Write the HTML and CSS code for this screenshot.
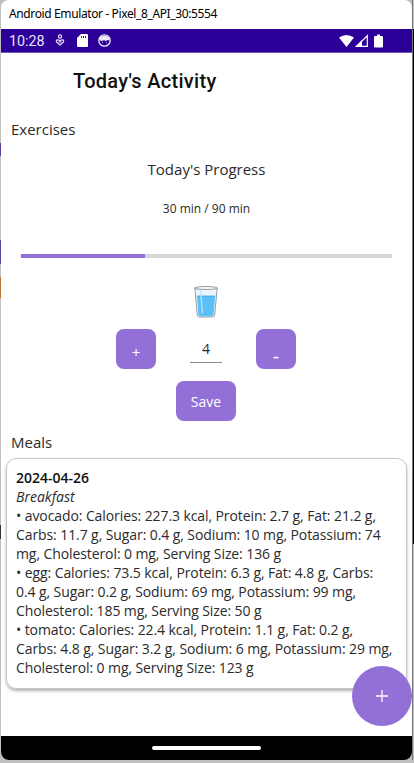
FILE: index.html
```html
<!DOCTYPE html>
<html lang="en">
<head>
<meta charset="utf-8">
<title>Today's Activity</title>
<link rel="stylesheet" href="styles.css">
</head>
<body>
<div class="window">
  <header class="titlebar"><span>Android Emulator - Pixel_8_API_30:5554</span></header>
  <div class="status">
    <span class="clock">10:28</span>
    <svg class="ic-health" width="10" height="13" viewBox="0 0 10 13" fill="none" stroke="#e4dcf4" stroke-width="1.2"><circle cx="5" cy="2.5" r="1.6"/><path d="M5 11L1.600 8C.5 6 3 4.800 5 7C7 4.800 9.500 6 8.400 8Z"/><path d="M3.500 8h3"/></svg>
    <svg class="ic-sd" width="11" height="13" viewBox="0 0 11 13"><path d="M4 0H10Q11 0 11 1V12Q11 13 10 13H1Q0 13 0 12V4Z" fill="#fff"/><path d="M4.500 2v2M6.500 2v2M8.500 2v2" stroke="#2c0098" stroke-width=".9"/></svg>
    <svg class="ic-face" width="13" height="13" viewBox="0 0 13 13"><circle cx="6.500" cy="6.500" r="5.700" fill="none" stroke="#eee9f8" stroke-width="1.300"/><path d="M1.500 3.500Q6.500 0 11.500 3.500V6.500L9.500 6L8 7L6 6.300L3.500 7L1.500 6.300Z" fill="#eee9f8"/><circle cx="4.500" cy="8.300" r=".6" fill="#c9b9ea"/><circle cx="8.500" cy="8.300" r=".6" fill="#c9b9ea"/></svg>
    <svg class="ic-signal" width="44" height="15" viewBox="0 0 44 15"><path d="M0 3.500Q7.500-1.500 15 3.500L7.500 13Z" fill="#fff"/><path d="M17.500 12.400L28.300 1.800V12.400Z" fill="none" stroke="#fff" stroke-width="1.200"/><path d="M16 13L23 6V13Z" fill="#fff"/><path d="M38 .5h3V2h2Q44 2 44 3V12.500Q44 13.500 43 13.500H36Q35 13.500 35 12.500V3Q35 2 36 2h2Z" fill="#fff"/></svg>
  </div>
  <main class="screen">
    <h1>Today's Activity</h1>
    <h2 class="section exercises">Exercises</h2>
    <p class="progress-title">Today's Progress</p>
    <p class="minutes">30 min / 90 min</p>
    <div class="track"><div class="fill"></div></div>
    <svg class="glass" width="24" height="32" viewBox="0 0 24 32"><path d="M.8 2L3.300 29Q3.500 31 5.500 31H18.500Q20.500 31 20.700 29L23.200 2Z" fill="#edf3f8" stroke="#8793a0" stroke-width=".9"/><path d="M3 10H21.200L19.500 28.500Q19.300 30.300 17.500 30.300H6.500Q4.700 30.300 4.500 28.500Z" fill="#5ac1f8"/><path d="M3 10H21" stroke="#389fd9" stroke-width=".8"/><path d="M6.500 4L8.500 27" stroke="#b9e6fd" stroke-width="1.300"/><ellipse cx="12" cy="2" rx="11.200" ry="1.500" fill="#f7f9fb" stroke="#7d858e" stroke-width=".8"/></svg>
    <div class="counter">
      <button class="btn square plus">+</button>
      <div class="count">4</div>
      <button class="btn square minus"><span>-</span></button>
    </div>
    <button class="btn save">Save</button>
    <h2 class="section meals">Meals</h2>
    <article class="card">
      <p class="date">2024-04-26</p>
      <p class="kind">Breakfast</p>
      <p>• avocado: Calories: 227.3 kcal, Protein: 2.7 g, Fat: 21.2 g,<br>Carbs: 11.7 g, Sugar: 0.4 g, Sodium: 10 mg, Potassium: 74<br>mg, Cholesterol: 0 mg, Serving Size: 136 g</p>
      <p>• egg: Calories: 73.5 kcal, Protein: 6.3 g, Fat: 4.8 g, Carbs:<br>0.4 g, Sugar: 0.2 g, Sodium: 69 mg, Potassium: 99 mg,<br>Cholesterol: 185 mg, Serving Size: 50 g</p>
      <p>• tomato: Calories: 22.4 kcal, Protein: 1.1 g, Fat: 0.2 g,<br>Carbs: 4.8 g, Sugar: 3.2 g, Sodium: 6 mg, Potassium: 29 mg,<br>Cholesterol: 0 mg, Serving Size: 123 g</p>
    </article>
    <button class="fab" aria-label="Add"><svg width="12" height="12" viewBox="0 0 12 12"><path d="M6 0V12M0 6H12" stroke="#fff" stroke-width="1.300"/></svg></button>
  </main>
  <nav class="navbar"><div class="handle"></div></nav>
</div>
</body>
</html>
```
FILE: styles.css
```css
* { box-sizing: border-box; }
body {
  margin: 0;
  width: 414px;
  height: 763px;
  overflow: hidden;
  padding: 0 2px 3px 1px;
  font-family: "Open Sans", sans-serif;
  color: #2b2b2b;
  background:
    linear-gradient(#5c3da5, #5c3da5) 0 143px / 1px 13px no-repeat,
    linear-gradient(#5c46a8, #5c46a8) 0 240px / 1px 24px no-repeat,
    linear-gradient(#b87833, #b87833) 0 277px / 1px 21px no-repeat,
    linear-gradient(#333, #333) 0 525px / 1px 14px no-repeat,
    linear-gradient(#777, #777) 412px 0 / 1px 760px no-repeat,
    linear-gradient(#000, #000) 413px 29px / 1px 515px no-repeat,
    #c0c0c0;
}
h1, h2, p { margin: 0; font-weight: 400; }
button { border: 0; padding: 0; color: #fff; font-family: inherit; }
.window {
  display: flex;
  flex-direction: column;
  height: 760px;
  overflow: hidden;
  border-radius: 8px;
  background: #fff;
}
.titlebar {
  height: 29px;
  padding-left: 8px;
  font: 12px/28px "Noto Sans", sans-serif;
  color: #000;
}
.titlebar span { display: inline-block; white-space: nowrap; letter-spacing: -0.38px; }
.status {
  display: flex;
  align-items: flex-start;
  height: 24px;
  padding: 5px 29px 0 8px;
  background: #2c0098;
  border-bottom: 1px solid #7654bb;
}
.clock { width: 46px; font: 14.3px/15px Roboto, sans-serif; color: #e9e3f7; }
.ic-sd { margin-left: 12px; }
.ic-face { margin-left: 10px; }
.ic-signal { margin-left: auto; }
.screen {
  position: relative;
  display: flex;
  flex-direction: column;
  height: 683px;
}
h1 {
  height: 58px;
  padding-left: 72px;
  font: 500 20px/57px Roboto, sans-serif;
  letter-spacing: 0.3px;
  color: #111;
}
.section { padding-left: 10px; font-size: 15px; line-height: 20px; }
.exercises { margin-top: 8px; }
.progress-title { margin-top: 20px; text-align: center; font-size: 15px; line-height: 20px; }
.minutes { margin-top: 21px; text-align: center; font-size: 12px; line-height: 18px; }
.track { width: 371px; height: 4px; margin: 36px 0 0 20px; background: #d7d7d7; }
.fill { width: 33.3%; height: 100%; background: #9370d8; }
.glass { margin: 28px 0 0 193px; }
.counter { display: flex; justify-content: space-between; width: 180px; height: 40px; margin: 11px 0 0 115px; }
.btn { border-radius: 8px; background: #9370d8; font-size: 14px; }
.square { width: 40px; height: 40px; }
.plus { padding-top: 6px; font-size: 15px; }
.minus { padding-top: 12px; font-size: 20px; }
.count {
  width: 32px;
  height: 34px;
  border-bottom: 1px solid #888;
  text-align: center;
  font-size: 14px;
  line-height: 39px;
}
.save { width: 60px; height: 40px; margin: 12px 0 0 175px; }
.meals { margin-top: 11px; }
.card {
  width: 401px;
  height: 231px;
  margin: 6px 0 0 5px;
  padding: 9px 9px 0;
  border: 1px solid #c6c6c6;
  border-radius: 10px;
  box-shadow: 0 2px 3px rgba(0, 0, 0, 0.3);
  font-size: 14px;
  line-height: 19px;
  letter-spacing: -0.09px;
  white-space: nowrap;
}
.date { font-weight: 600; letter-spacing: 0; color: #111; }
.kind { font-style: italic; letter-spacing: 0; }
.fab {
  position: absolute;
  right: 0;
  bottom: 10px;
  display: flex;
  align-items: center;
  justify-content: center;
  width: 60px;
  height: 60px;
  border-radius: 50%;
  background: #9370d8;
}
.navbar { height: 24px; padding-top: 10px; background: #000; }
.handle { width: 109px; height: 4px; margin-left: 151px; border-radius: 2px; background: #fff; }
```
